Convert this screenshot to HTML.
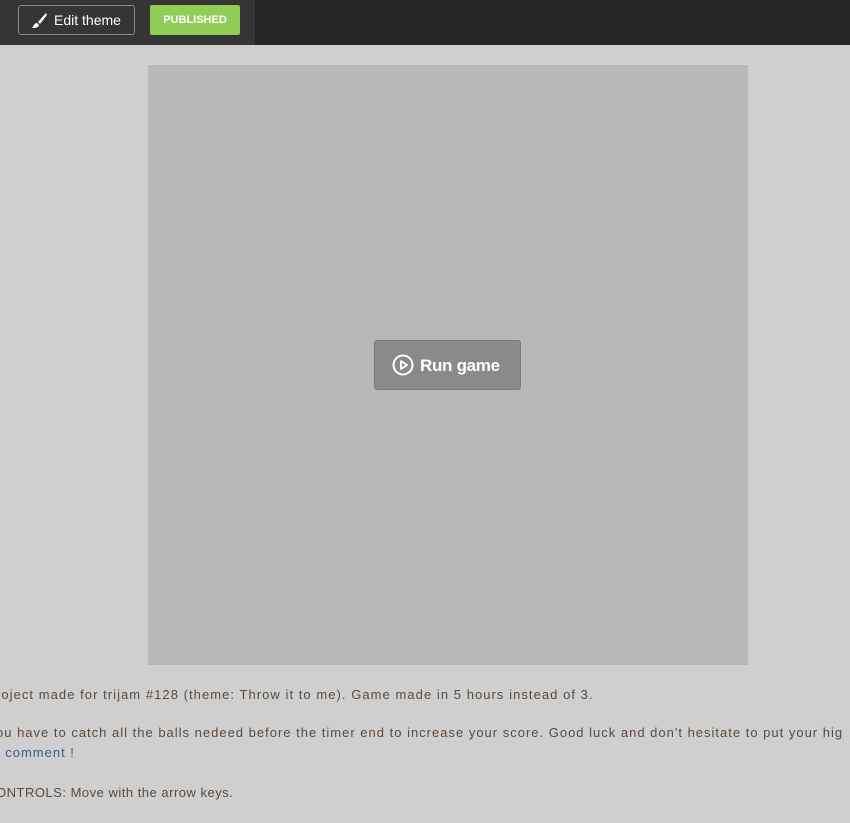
<!DOCTYPE html>
<html><head><style>
body{margin:0;width:850px;height:823px;background:#cfcfcf;overflow:hidden;position:relative;font-family:"Liberation Sans",sans-serif}
.hdr{position:absolute;left:0;top:0;width:850px;height:45px;background:#262626}
.hl{position:absolute;left:0;top:0;width:255px;height:45px;background:#353535}
.edit{position:absolute;left:18px;top:5px;width:117px;border:1px solid #888;border-radius:3px;color:#fff;font-size:14px;line-height:28px;box-sizing:border-box;height:30px;padding-left:35px}
.pub{position:absolute;left:150px;top:5px;width:90px;height:30px;background:#8fcd57;border-radius:2px;color:#fff;font-weight:bold;font-size:11px;line-height:30px;text-align:center}
.game{position:absolute;left:148px;top:65px;width:600px;height:600px;background:#b8b8b8}
.run{position:absolute;left:374px;top:340px;width:147px;height:50px;background:#8a8a8a;border:1px solid #7a7a7a;border-radius:3px;box-sizing:border-box;color:#fff;font-weight:bold;font-size:17px;line-height:50px;padding-left:45px;letter-spacing:-0.3px}
.t{position:absolute;left:-4px;font-size:13px;color:#5c4a3c;white-space:nowrap;letter-spacing:1px}
</style></head><body>
<div class="hdr"><div class="hl"></div>
<div class="edit"><svg style="position:absolute;left:11px;top:6px" width="18" height="18" viewBox="0 0 18 18"><path d="M16 1 L8 10 L10 12 L17 3Z" fill="#fff"/><path d="M7 11 C4 11 4 14 2 16 C6 16 9 15 9 13Z" fill="#fff"/></svg>Edit theme</div>
<div class="pub">PUBLISHED</div></div>
<div class="game"></div>
<div class="run"><svg style="position:absolute;left:17px;top:13px" width="22" height="22" viewBox="0 0 22 22"><circle cx="11" cy="11" r="9.5" fill="none" stroke="#fff" stroke-width="2"/><path d="M9 7 L15 11 L9 15Z" fill="none" stroke="#fff" stroke-width="1.8" stroke-linejoin="round"/></svg>Run game</div>
<div class="t" style="top:687px;letter-spacing:1.05px">roject made for trijam #128 (theme: Throw it to me). Game made in 5 hours instead of 3.</div>
<div class="t" style="top:725px">ou have to catch all the balls nedeed before the timer end to increase your score. Good luck and don't hesitate to put your hig</div>
<div class="t" style="top:745px;color:#3f5a8a">&nbsp;&nbsp;comment !</div>
<div class="t" style="top:785px;letter-spacing:0.5px">ONTROLS: Move with the arrow keys.</div>
</body></html>
